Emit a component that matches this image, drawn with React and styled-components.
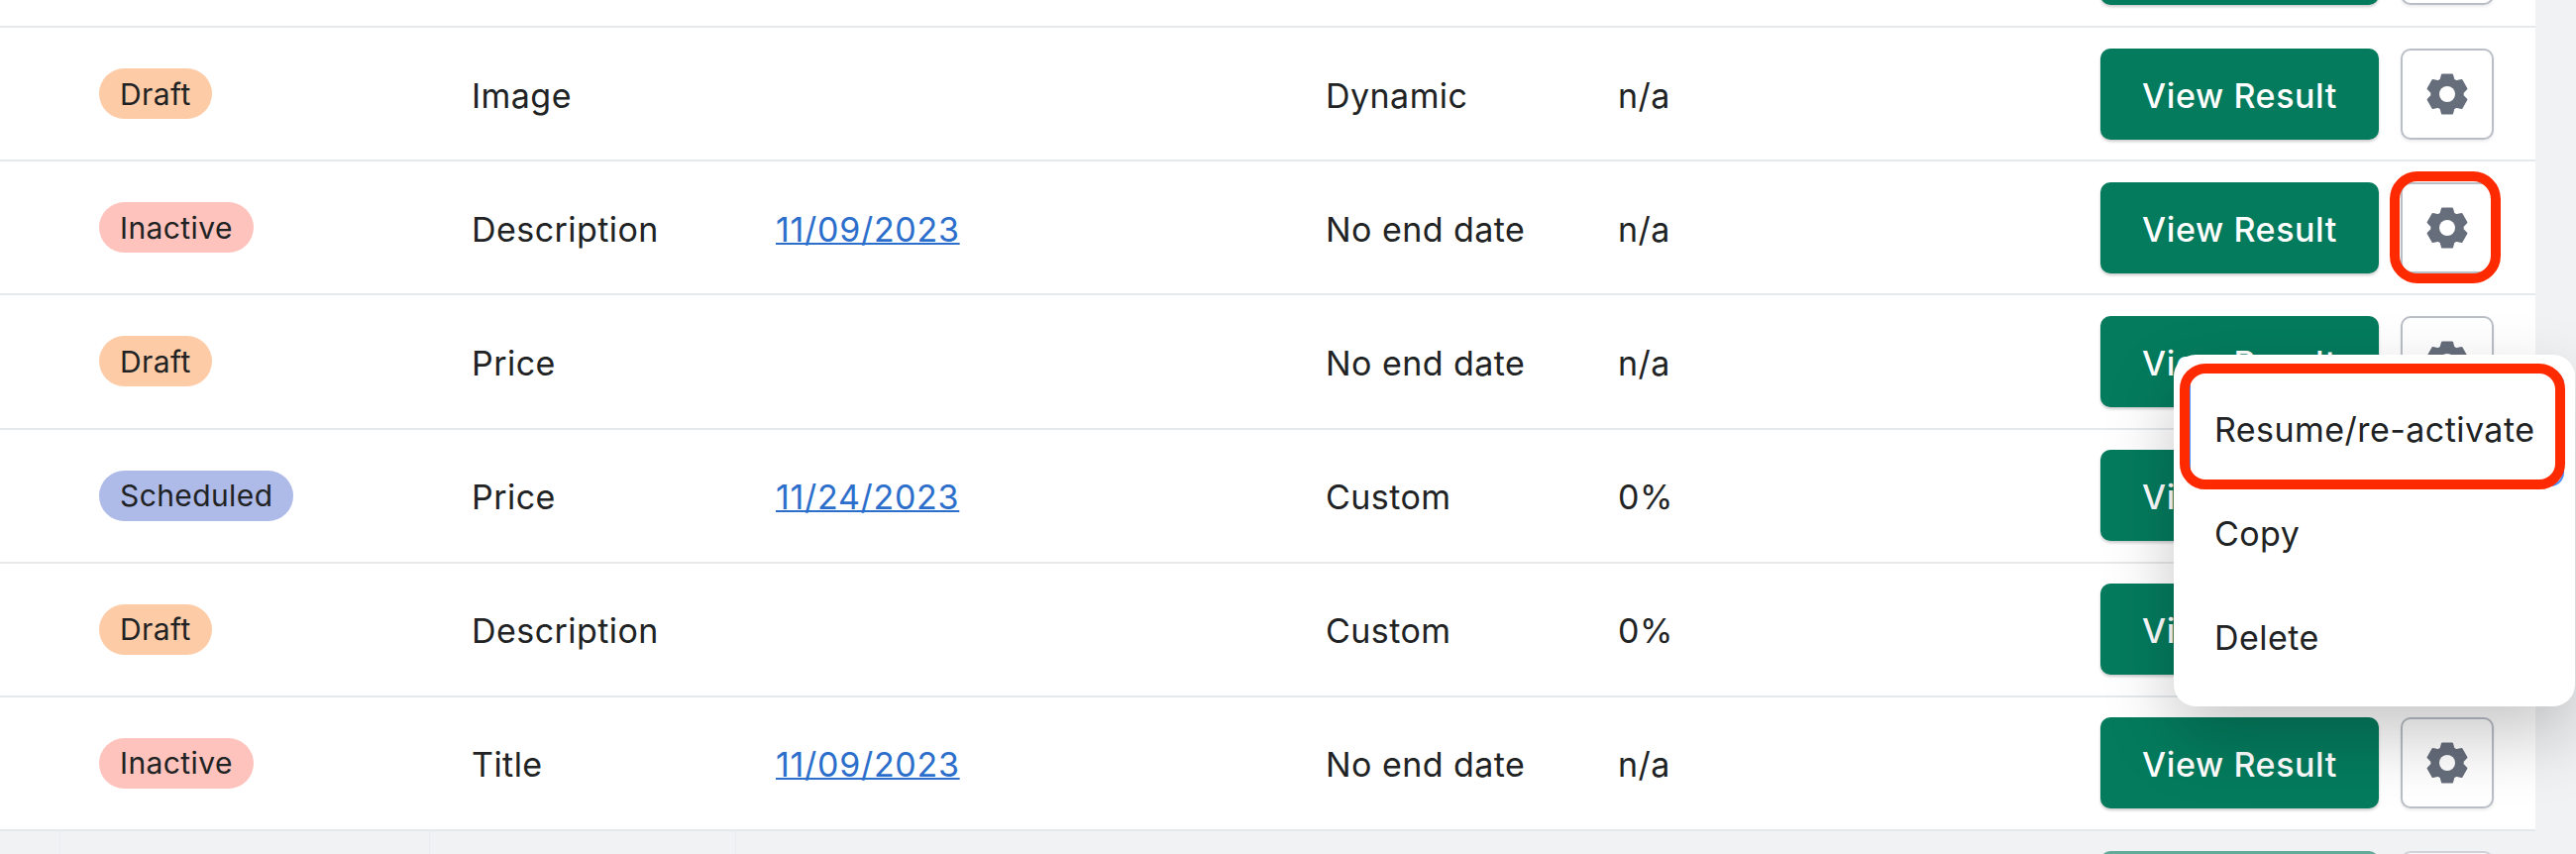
import React from 'react';
import styled, { createGlobalStyle } from 'styled-components';

const GlobalStyle = createGlobalStyle`
  html, body { margin: 0; padding: 0; background: #f1f2f4; }
  body { font-family: Inter, "Liberation Sans", sans-serif; color: #202223; }
`;

const Page = styled.div`
  position: relative;
  width: 2600px;
  height: 862px;
  overflow: hidden;
  background: #f1f2f4;
`;

const Panel = styled.div`
  width: 2559px;
  margin-top: -107.25px;
  background: #fff;
`;

const Row = styled.div`
  display: grid;
  grid-template-columns: 376px 307px 555px 295px 1fr auto;
  align-items: center;
  height: 135.2px;
  box-sizing: border-box;
  padding: 0 42px 0 100px;
  border-bottom: 2px solid #e6e9ec;
`;

const PeekRow = styled(Row)`
  height: 60px;
  width: 2559px;
  padding-top: 20px;
  align-items: start;
  border-bottom: 0;
  opacity: 0.6;
  background-image:
    linear-gradient(#eaebee, #eaebee),
    linear-gradient(#eaebee, #eaebee),
    linear-gradient(#eaebee, #eaebee);
  background-size: 1px 100%;
  background-repeat: no-repeat;
  background-position: 60px 0, 433px 0, 742px 0;
`;

const tones = { draft: '#fdcba6', inactive: '#fec3bc', scheduled: '#aebae8' };

const Badge = styled.span`
  justify-self: start;
  display: inline-flex;
  align-items: center;
  height: 51px;
  padding: 0 21px;
  border-radius: 26px;
  font-size: 30px;
  letter-spacing: 0.4px;
  background: ${(p) => tones[p.$tone]};
`;

const Cell = styled.span`
  padding-top: 3px;
  font-size: 34px;
  letter-spacing: 0.45px;
  white-space: nowrap;
`;

const DateLink = styled.a`
  letter-spacing: 0.7px;
  color: #2c6ecb;
  text-decoration: underline;
  text-decoration-thickness: 2px;
`;

const Actions = styled.div`
  display: flex;
  gap: 22px;
`;

const ResultButton = styled.button`
  width: 281px;
  height: 92px;
  padding: 3px 0 0;
  border: 0;
  border-radius: 10px;
  background: #047b5d;
  box-shadow: 0 2px 3px rgba(0, 0, 0, 0.2);
  color: #fff;
  font: 500 34px Inter, sans-serif;
  letter-spacing: 0.6px;
`;

const GearButton = styled.button`
  position: relative;
  display: flex;
  align-items: center;
  justify-content: center;
  width: 94px;
  height: 92px;
  padding: 0;
  border: 2px solid #b9bec7;
  border-radius: 10px;
  background: #fff;
  box-shadow: 0 2px 3px rgba(0, 0, 0, 0.08);
`;

const GearRing = styled.span`
  position: absolute;
  inset: -13px -9px -12px -13px;
  border: 10px solid #ff2a00;
  border-radius: 28px;
`;

const Menu = styled.div`
  position: absolute;
  left: 2194px;
  top: 358px;
  display: flex;
  flex-direction: column;
  box-sizing: border-box;
  width: 405px;
  height: 355px;
  padding-top: 23px;
  background: #fff;
  border-radius: 22px;
  box-shadow: 0 30px 70px rgba(0, 0, 0, 0.22);
`;

const MenuItem = styled.div`
  position: relative;
  display: flex;
  align-items: center;
  height: 105px;
  padding-left: 41px;
  font-size: 34px;
  letter-spacing: 0.45px;
`;

const MenuFocus = styled.span`
  position: absolute;
  inset: -7px 11px -5px 15px;
  border: 2px solid #458fff;
  border-radius: 14px;
`;

const MenuRing = styled.span`
  position: absolute;
  inset: -14px 10px -8px 6px;
  border: 10px solid #ff2a00;
  border-radius: 26px;
`;

// six rounded teeth, one pointing straight up
const gearPoints = Array.from({ length: 6 }, (_, k) => {
  const centre = k * 60 - 90;
  return [
    [15.5, centre - 30],
    [15.5, centre - 24],
    [20, centre - 14],
    [20, centre + 14],
    [15.5, centre + 24],
  ];
})
  .flat()
  .map(([r, deg]) => {
    const a = (deg * Math.PI) / 180;
    return `${(30 + r * Math.cos(a)).toFixed(2)},${(30 + r * Math.sin(a)).toFixed(2)}`;
  })
  .join(' ');

const GearIcon = () => (
  <svg width="60" height="60" viewBox="0 0 60 60">
    <polygon points={gearPoints} fill="#666d7b" stroke="#666d7b" strokeWidth="2.4" strokeLinejoin="round" />
    <circle cx="30" cy="30" r="8" fill="#fff" />
  </svg>
);

const rows = [
  { status: 'Draft', tone: 'draft', type: 'Title', date: '', end: 'Custom', rate: '0%' },
  { status: 'Draft', tone: 'draft', type: 'Image', date: '', end: 'Dynamic', rate: 'n/a' },
  { status: 'Inactive', tone: 'inactive', type: 'Description', date: '11/09/2023', end: 'No end date', rate: 'n/a', ringed: true },
  { status: 'Draft', tone: 'draft', type: 'Price', date: '', end: 'No end date', rate: 'n/a' },
  { status: 'Scheduled', tone: 'scheduled', type: 'Price', date: '11/24/2023', end: 'Custom', rate: '0%' },
  { status: 'Draft', tone: 'draft', type: 'Description', date: '', end: 'Custom', rate: '0%' },
  { status: 'Inactive', tone: 'inactive', type: 'Title', date: '11/09/2023', end: 'No end date', rate: 'n/a' },
];

const ActionButtons = ({ ringed }) => (
  <Actions>
    <ResultButton>View Result</ResultButton>
    <GearButton>
      <GearIcon />
      {ringed && <GearRing />}
    </GearButton>
  </Actions>
);

export default function App() {
  return (
    <Page>
      <GlobalStyle />
      <Panel>
        {rows.map((row, i) => (
          <Row key={i}>
            <Badge $tone={row.tone}>{row.status}</Badge>
            <Cell>{row.type}</Cell>
            <Cell>{row.date && <DateLink>{row.date}</DateLink>}</Cell>
            <Cell>{row.end}</Cell>
            <Cell>{row.rate}</Cell>
            <ActionButtons ringed={row.ringed} />
          </Row>
        ))}
      </Panel>
      <PeekRow>
        <span />
        <span />
        <span />
        <span />
        <span />
        <ActionButtons />
      </PeekRow>
      <Menu>
        <MenuItem>
          Resume/re-activate
          <MenuFocus />
          <MenuRing />
        </MenuItem>
        <MenuItem>Copy</MenuItem>
        <MenuItem>Delete</MenuItem>
      </Menu>
    </Page>
  );
}
